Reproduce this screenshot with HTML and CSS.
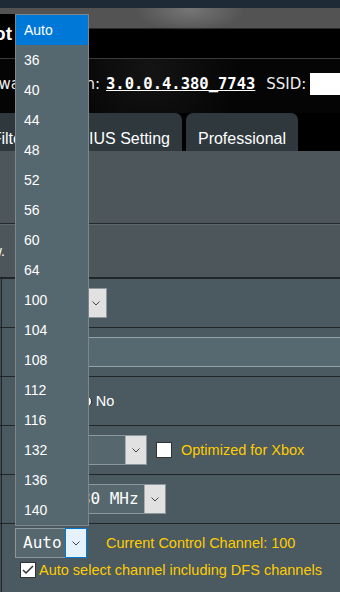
FILE: index.html
```html
<!DOCTYPE html>
<html lang="en">
<head>
    <meta charset="UTF-8">
    <meta name="viewport" content="width=device-width, initial-scale=1.0">
    <title>Wireless - General</title>
    <link rel="stylesheet" href="styles.css">
</head>
<body>
    <div class="page">
        <div class="topbar"></div>
        <div class="header">
            <div class="header-btns">
                <span class="hdr-btn">Logout</span>
                <span class="hdr-btn">Reboot</span>
            </div>
        </div>
        <div class="info">
            <span class="fw-label">Firmware Version:</span>
            <a class="fw-ver">3.0.0.4.380_7743</a>
            <span class="ssid-label">SSID:</span>
            <span class="ssid-box"></span>
        </div>
        <div class="tabs">
            <div class="tab active">General</div>
            <div class="tab">WPS</div>
            <div class="tab">WDS</div>
            <div class="tab">Wireless MAC Filter</div>
            <div class="tab">RADIUS Setting</div>
            <div class="tab">Professional</div>
        </div>
        <div class="panel">
            <div class="panel-head">Wireless - General</div>
            <div class="sep"></div>
            <div class="desc">Set up the wireless related information below.</div>
            <div class="table">
                <div class="row">
                    <div class="th">Band</div>
                    <div class="td">
                        <div class="sel w-band">
                            <span class="sel-val">5GHz</span>
                            <span class="sel-arrow"><svg width="8" height="5" viewBox="0 0 8 5"><polyline points="0.5,0.5 4,4 7.5,0.5" fill="none" stroke="#444" stroke-width="1"/></svg></span>
                        </div>
                    </div>
                </div>
                <div class="row">
                    <div class="th">Network Name (SSID)</div>
                    <div class="td">
                        <div class="txt"></div>
                    </div>
                </div>
                <div class="row">
                    <div class="th">Hide SSID</div>
                    <div class="td">
                        <label class="radio first"><span class="radio-dot"></span>Yes</label>
                        <label class="radio on"><span class="radio-dot"></span>No</label>
                    </div>
                </div>
                <div class="row">
                    <div class="th">Wireless Mode</div>
                    <div class="td">
                        <div class="sel w-mode">
                            <span class="sel-val">Auto</span>
                            <span class="sel-arrow"><svg width="8" height="5" viewBox="0 0 8 5"><polyline points="0.5,0.5 4,4 7.5,0.5" fill="none" stroke="#444" stroke-width="1"/></svg></span>
                        </div>
                        <span class="chk"></span>
                        <span class="note">Optimized for Xbox</span>
                    </div>
                </div>
                <div class="row">
                    <div class="th">Channel bandwidth</div>
                    <div class="td">
                        <div class="sel w-bw">
                            <span class="sel-val">20/40/80 MHz</span>
                            <span class="sel-arrow"><svg width="8" height="5" viewBox="0 0 8 5"><polyline points="0.5,0.5 4,4 7.5,0.5" fill="none" stroke="#444" stroke-width="1"/></svg></span>
                        </div>
                    </div>
                </div>
                <div class="row last">
                    <div class="th">Control Channel</div>
                    <div class="td stack">
                        <div class="line">
                            <div class="sel w-ch focus">
                                <span class="sel-val">Auto</span>
                                <span class="sel-arrow"><svg width="8" height="5" viewBox="0 0 8 5"><polyline points="0.5,0.5 4,4 7.5,0.5" fill="none" stroke="#444" stroke-width="1"/></svg></span>
                            </div>
                            <span class="note cur">Current Control Channel: 100</span>
                        </div>
                        <div class="line dfs">
                            <span class="chk checked"><svg width="14" height="14" viewBox="0 0 14 14"><polyline points="2,7 5,10 12,3" fill="none" stroke="#333" stroke-width="1.5"/></svg></span>
                            <span class="note">Auto select channel including DFS channels</span>
                        </div>
                    </div>
                </div>
            </div>
        </div>
    </div>

    <ul class="options">
        <li class="picked">Auto</li>
        <li>36</li>
        <li>40</li>
        <li>44</li>
        <li>48</li>
        <li>52</li>
        <li>56</li>
        <li>60</li>
        <li>64</li>
        <li>100</li>
        <li>104</li>
        <li>108</li>
        <li>112</li>
        <li>116</li>
        <li>132</li>
        <li>136</li>
        <li>140</li>
    </ul>
</body>
</html>
```
FILE: styles.css
```css
html, body {
    margin: 0;
    height: 592px;
    overflow: hidden;
}

body {
    position: relative;
    background-color: #000;
    font-family: "DejaVu Sans", sans-serif;
    color: #fff;
}

/* the page is scrolled sideways, so it starts left of the window */
.page {
    margin-left: -300px;
    width: 640px;
}

.topbar {
    height: 8px;
    background-color: #1e2b36;
}

.header {
    height: 50px;
    border-bottom: 1px solid #3a3a3a;
    background:
        radial-gradient(ellipse 55px 22px at 490px 2px, rgba(255, 255, 255, 0.2), transparent),
        linear-gradient(#535353 0, #535353 20px, #2a2a2a 20px, #2a2a2a 21px, #000 21px);
}

.header-btns {
    width: 324px;
    display: flex;
    justify-content: flex-end;
    gap: 8px;
}

.hdr-btn {
    margin-top: 6px;
    height: 40px;
    padding: 9px 12px 0;
    box-sizing: border-box;
    background-color: #000;
    font: bold 19px/22px "Liberation Sans", sans-serif;
    border-radius: 4px 4px 0 0;
}

.info {
    height: 54px;
    padding-top: 14px;
    box-sizing: border-box;
    display: flex;
    align-items: flex-start;
    line-height: 22px;
    font-size: 15px;
    background: radial-gradient(circle at 450px 10px, #141414, #050505 90px);
}

.fw-label {
    width: 400px;
    flex-shrink: 0;
    text-align: right;
    color: #eee;
}

.fw-ver {
    margin-left: 6px;
    font: bold 15.5px/22px "DejaVu Sans Mono", monospace;
    text-decoration: underline;
    color: #fff;
}

.ssid-label {
    margin-left: 11px;
    color: #eee;
}

.ssid-box {
    margin-left: 4px;
    width: 60px;
    height: 22px;
    background-color: #fff;
}

.tabs {
    width: 598px;
    height: 38px;
    display: flex;
    justify-content: flex-end;
    gap: 4px;
}

.tab {
    flex-shrink: 0;
    padding: 18px 12px 0;
    box-sizing: border-box;
    background-color: #2e383d;
    border-radius: 7px 7px 0 0;
    font: 16px/16px "Liberation Sans", sans-serif;
    white-space: nowrap;
}

.tab.active {
    background-color: #4d575b;
}

.panel {
    background-color: #4d575b;
}

.panel-head {
    height: 72px;
    padding-left: 120px;
    font: bold 16px/72px "Liberation Sans", sans-serif;
}

.sep {
    border-top: 1px solid #23292c;
    border-bottom: 1px solid #5e686c;
}

.desc {
    width: 305px;
    height: 52px;
    line-height: 52px;
    text-align: right;
    white-space: nowrap;
    font-family: "Liberation Sans", sans-serif;
    font-size: 14px;
}

.table {
    border-top: 2px solid #202527;
}

.row {
    height: 49px;
    box-sizing: border-box;
    border-bottom: 1px solid #202527;
    display: flex;
}

.row.last {
    height: 80px;
    border-bottom: none;
}

.th {
    width: 302px;
    flex-shrink: 0;
    padding-left: 120px;
    box-sizing: border-box;
    border-right: 1px solid #202527;
    background-color: #434e52;
    display: flex;
    align-items: center;
    font: 14.5px "Liberation Sans", sans-serif;
}

.td {
    flex: 1;
    padding-left: 13px;
    background-color: #4a5a60;
    display: flex;
    align-items: center;
    font: 14.5px "Liberation Sans", sans-serif;
}

.td.stack {
    flex-direction: column;
    align-items: flex-start;
    padding-top: 4px;
}

.line {
    display: flex;
    align-items: center;
}

.line.dfs {
    margin-top: 4px;
    padding-left: 5px;
}

.sel {
    height: 30px;
    box-sizing: border-box;
    border: 1px solid #8d989c;
    background-color: #56676e;
    display: flex;
    font: 16px/28px "DejaVu Sans Mono", monospace;
}

.sel-val {
    flex: 1;
    padding-left: 7px;
    white-space: nowrap;
    overflow: hidden;
}

.sel-arrow {
    width: 20px;
    flex-shrink: 0;
    background-color: #e1e1e1;
    border-left: 1px solid #adadad;
    display: flex;
    align-items: center;
    justify-content: center;
}

.sel.focus .sel-arrow {
    margin: -1px -1px -1px 0;
    border: 1px solid #0078d7;
    background-color: #e5f1fb;
}

.w-band { width: 92px; }
.w-mode { width: 132px; }
.w-bw { width: 151px; }
.w-ch { width: 72px; }

.txt {
    width: 420px;
    height: 30px;
    box-sizing: border-box;
    border: 1px solid #95a2a6;
    background-color: #566970;
}

.radio {
    display: inline-flex;
    align-items: center;
}

.radio.first {
    margin-right: 23px;
}

.radio-dot {
    width: 13px;
    height: 13px;
    margin-right: 4px;
    box-sizing: border-box;
    border: 1px solid #333;
    border-radius: 50%;
    background-color: #fff;
}

.radio.on .radio-dot {
    background: radial-gradient(circle, #333 0 3px, #fff 3.5px);
}

.chk {
    width: 16px;
    height: 16px;
    flex-shrink: 0;
    margin-left: 9px;
    box-sizing: border-box;
    border: 1px solid #333;
    background-color: #fff;
    display: flex;
    align-items: center;
    justify-content: center;
}

.chk.checked {
    margin-left: 0;
}

.note {
    margin-left: 9px;
    color: #ffcc00;
    white-space: nowrap;
}

.note.cur {
    margin-left: 19px;
}

.dfs .note {
    margin-left: 3px;
}

/* open list of the Control Channel select */
.options {
    position: absolute;
    left: 15px;
    top: 14px;
    width: 74px;
    margin: 0;
    padding: 0;
    list-style: none;
    box-sizing: border-box;
    border: 1px solid #7f8589;
    background-color: #56686f;
}

.options li {
    height: 30px;
    padding-left: 8px;
    font: 14px/30px "Liberation Sans", sans-serif;
    color: #fff;
}

.options li.picked {
    background-color: #0078d7;
}
```
